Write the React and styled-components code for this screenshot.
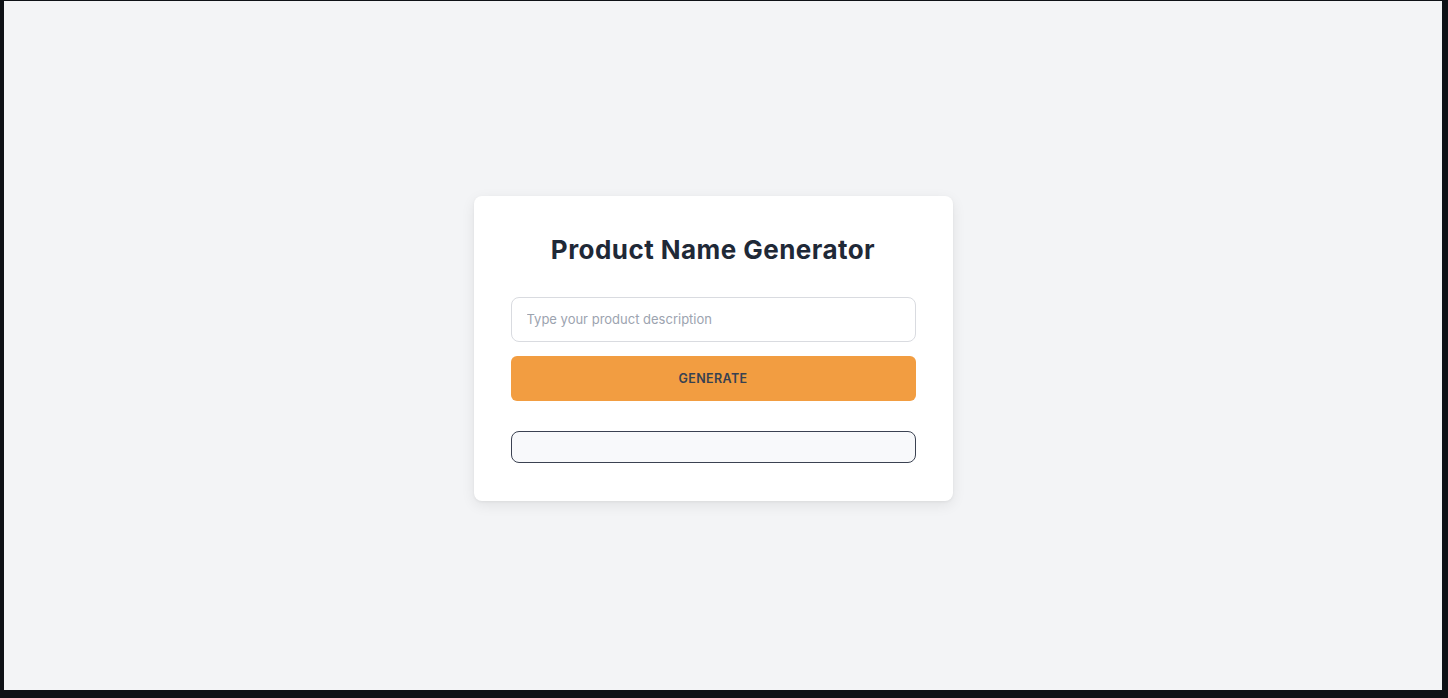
import React, { useState } from 'react';
import styled, { createGlobalStyle } from 'styled-components';

const GlobalStyle = createGlobalStyle`
  html, body {
    margin: 0;
    padding: 0;
    height: 100%;
    background: #0e1116;
  }
  #root {
    height: 100%;
  }
  * {
    box-sizing: border-box;
  }
`;

// the dark frame around the page in the screenshot
const Frame = styled.div`
  height: 100%;
  padding: 1px 6px 8px 4px;
`;

const Page = styled.main`
  height: 100%;
  background: #f3f4f6;
  display: flex;
  align-items: center;
  justify-content: center;
  padding-right: 20px;
  padding-top: 5px;
  font-family: Inter, "Liberation Sans", sans-serif;
`;

const Card = styled.section`
  width: 479px;
  background: #ffffff;
  border-radius: 8px;
  box-shadow: 0 4px 14px rgba(0, 0, 0, 0.08), 0 1px 3px rgba(0, 0, 0, 0.05);
  padding: 37px 37px 38px 37px;
  display: flex;
  flex-direction: column;
`;

const Title = styled.h1`
  margin: 0 0 30px;
  text-align: center;
  font-size: 26px;
  line-height: 34px;
  font-weight: 700;
  color: #1f2937;
  letter-spacing: 0.45px;
`;

const Input = styled.input`
  height: 45px;
  width: 100%;
  border: 1px solid #d9dbe0;
  border-radius: 8px;
  padding: 0 15px;
  font-family: inherit;
  font-size: 13px;
  color: #1f2937;
  background: #fff;
  outline: none;
  &::placeholder {
    color: #9ca3af;
  }
`;

const Button = styled.button`
  margin-top: 14px;
  height: 45px;
  width: 100%;
  border: none;
  border-radius: 6px;
  background: #f29d41;
  color: #374151;
  font-family: inherit;
  font-size: 12.5px;
  font-weight: 600;
  letter-spacing: 0.4px;
  text-transform: uppercase;
  cursor: pointer;
`;

const Output = styled.div`
  margin-top: 30px;
  height: 32px;
  border: 1px solid #3b4252;
  border-radius: 8px;
  background: #f8f9fb;
  padding: 6px 12px;
  font-size: 14px;
  color: #1f2937;
`;

const App = () => {
  const [text, setText] = useState('');
  const [result, setResult] = useState('');

  return (
    <>
      <GlobalStyle />
      <Frame>
        <Page>
          <Card>
            <Title>Product Name Generator</Title>
            <Input
              value={text}
              onChange={(e) => setText(e.target.value)}
              placeholder="Type your product description"
            />
            <Button onClick={() => setResult(text)}>Generate</Button>
            <Output>{result}</Output>
          </Card>
        </Page>
      </Frame>
    </>
  );
};

export default App;
